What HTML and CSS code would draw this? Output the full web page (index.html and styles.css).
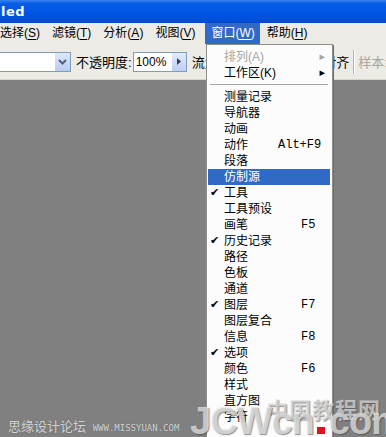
FILE: index.html
```html
<!DOCTYPE html>
<html>

<head>
    <meta charset="UTF-8">
    <title>Untitled</title>
    <link rel="stylesheet" href="styles.css">
</head>

<body>
    <div class="window">
        <div class="titlebar"><span class="title">led</span></div>

        <ul class="menubar">
            <li>选择(<u>S</u>)</li>
            <li>滤镜(<u>T</u>)</li>
            <li>分析(<u>A</u>)</li>
            <li>视图(<u>V</u>)</li>
            <li class="open">窗口(<u>W</u>)</li>
            <li>帮助(<u>H</u>)</li>
        </ul>

        <div class="toolbar">
            <div class="combo">
                <span class="combo-field"></span>
                <span class="combo-btn">
                    <svg width="9" height="6" viewBox="0 0 9 6"><path d="M1 1l3.5 3.5L8 1" fill="none" stroke="#4d6185" stroke-width="2"/></svg>
                </span>
            </div>
            <span class="label">不透明度:</span>
            <div class="spin">
                <span class="spin-field">100%</span>
                <span class="spin-btn">
                    <svg width="4" height="7" viewBox="0 0 4 7"><path d="M0 0l4 3.5L0 7z" fill="#2f3f60"/></svg>
                </span>
            </div>
            <span class="label">流量:</span>
            <div class="tb-right">
                <span class="label">对齐</span>
                <span class="sep"></span>
                <span class="label dim">样本:</span>
            </div>
        </div>

        <div class="canvas"></div>

        <ul class="dropdown">
            <li class="disabled">排列(A)<span class="arrow">&#9656;</span></li>
            <li>工作区(K)<span class="arrow">&#9656;</span></li>
            <li class="divider"></li>
            <li>测量记录</li>
            <li>导航器</li>
            <li>动画</li>
            <li>动作<span class="key">Alt+F9</span></li>
            <li>段落</li>
            <li class="active">仿制源</li>
            <li class="checked">工具</li>
            <li>工具预设</li>
            <li>画笔<span class="key short">F5</span></li>
            <li class="checked">历史记录</li>
            <li>路径</li>
            <li>色板</li>
            <li>通道</li>
            <li class="checked">图层<span class="key short">F7</span></li>
            <li>图层复合</li>
            <li>信息<span class="key short">F8</span></li>
            <li class="checked">选项</li>
            <li>颜色<span class="key short">F6</span></li>
            <li>样式</li>
            <li>直方图</li>
            <li>字符</li>
        </ul>

        <div class="mark-left">思缘设计论坛 <span class="mark-url">WWW.MISSYUAN.COM</span></div>
        <div class="mark-cn">中国教程网</div>
        <div class="mark-site">JCWcn<span class="dot"></span>com</div>
    </div>
</body>

</html>
```

FILE: styles.css
```css
* {
    margin: 0;
    padding: 0;
}

body {
    width: 386px;
    height: 437px;
    overflow: hidden;
    background: #808080;
    font-family: "Liberation Sans", "Noto Sans CJK SC", sans-serif;
    font-size: 12px;
    color: #000;
}

.window {
    position: relative;
    height: 437px;
    display: flex;
    flex-direction: column;
}

.titlebar {
    height: 23px;
    flex-shrink: 0;
    background: linear-gradient(#3a80f3 0%, #0a5fe6 15%, #0055e5 50%, #0050dc 85%, #0a48c4 100%);
    display: flex;
    align-items: center;
}

.title {
    color: #fff;
    font-family: "DejaVu Sans", sans-serif;
    font-weight: bold;
    font-size: 13px;
    margin-left: 1px;
    letter-spacing: 0.5px;
}

.menubar {
    height: 21px;
    flex-shrink: 0;
    background: #ecebe5;
    list-style: none;
    display: flex;
    align-items: stretch;
    margin-left: -5px;
}

.menubar li {
    padding: 0 5px;
    margin-right: 2px;
    line-height: 20px;
    white-space: nowrap;
}

.menubar li u {
    text-decoration: none;
    border-bottom: 1px solid currentColor;
    line-height: 11px;
    display: inline-block;
}

.menubar .open {
    background: #316ac5;
    color: #fff;
    margin-left: 3px;
    padding: 0 5px 0 6px;
}

.toolbar {
    height: 35px;
    flex-shrink: 0;
    background: #ecebe5;
    border-bottom: 1px solid #d6d3c7;
    box-shadow: 0 1px 0 #9c9a92;
    display: flex;
    align-items: center;
    overflow: hidden;
    white-space: nowrap;
}

.combo {
    display: flex;
    height: 18px;
    border: 1px solid #7f9db9;
    border-left: none;
    margin-top: 1px;
}

.combo-field {
    width: 54px;
    background: #fff;
}

.combo-btn {
    width: 15px;
    background: linear-gradient(#dfe8fb, #b8cbf2);
    border-left: 1px solid #fff;
    display: flex;
    align-items: center;
    justify-content: center;
}

.label {
    margin-left: 5px;
    font-size: 13px;
}

.spin {
    display: flex;
    height: 18px;
    margin-left: 1px;
    border: 1px solid #7f9db9;
}

.spin-field {
    width: 36px;
    background: #fff;
    padding-left: 2px;
    line-height: 18px;
    font-size: 12px;
}

.spin-btn {
    width: 14px;
    background: linear-gradient(#e2ebfb, #bccdf0);
    display: flex;
    align-items: center;
    justify-content: center;
}

.tb-right {
    display: flex;
    align-items: center;
    margin-left: 97px;
}

.sep {
    width: 1px;
    height: 24px;
    background: #b5b3aa;
    margin-left: 4px;
    box-shadow: 1px 0 0 #fff;
}

.label.dim {
    color: #a7a6a0;
    margin-left: 4px;
}

.canvas {
    flex: 1;
    background: #808080;
}

.dropdown {
    position: absolute;
    left: 206px;
    top: 44px;
    width: 125px;
    height: 400px;
    background: #fcfcfc;
    border: 1px solid #8e8d88;
    box-shadow: 1px 1px 0 #6d6d6d;
    list-style: none;
    padding-top: 4px;
}

.dropdown li {
    position: relative;
    height: 16px;
    line-height: 16px;
    padding-left: 16px;
    margin: 0 2px 0 1px;
    font-size: 12px;
    white-space: nowrap;
}

.dropdown .disabled {
    color: #a6a59f;
}

.dropdown .divider {
    height: 1px;
    margin: 3px 4px 3px 3px;
    background: #a7a6a0;
    border-bottom: 1px solid #fff;
}

.dropdown .active {
    background: #316ac5;
    color: #fff;
}

.dropdown .checked::before {
    content: "\2714";
    position: absolute;
    left: 2px;
    top: 0;
    font-size: 11px;
    font-family: "DejaVu Sans", sans-serif;
}

.dropdown .arrow {
    position: absolute;
    right: 5px;
    top: 0;
    font-size: 11px;
    font-family: "DejaVu Sans", sans-serif;
}

.dropdown .key {
    position: absolute;
    left: 70px;
    top: 0;
    font-family: "Liberation Mono", monospace;
    font-size: 12px;
}

.dropdown .key.short {
    left: 93px;
}

.mark-left {
    position: absolute;
    left: 8px;
    top: 416px;
    color: rgba(235, 235, 235, 0.85);
    font-size: 13px;
    text-shadow: 0 0 1px #555;
}

.mark-url {
    font-family: "DejaVu Sans Mono", monospace;
    font-size: 9px;
    margin-left: 3px;
}

.mark-cn {
    position: absolute;
    left: 266px;
    top: 392px;
    font-size: 22px;
    font-weight: bold;
    letter-spacing: 1px;
    color: rgba(225, 225, 225, 0.7);
    text-shadow: 1px 1px 1px rgba(80, 80, 80, 0.6);
}

.mark-site {
    position: absolute;
    left: 190px;
    top: 400px;
    font-size: 38px;
    font-weight: bold;
    letter-spacing: -1px;
    color: rgba(230, 230, 230, 0.75);
    text-shadow: 1px 1px 1px rgba(70, 70, 70, 0.6);
    display: flex;
    align-items: baseline;
}

.mark-site .dot {
    width: 8px;
    height: 7px;
    background: #e0121b;
    margin: 0 4px 0 3px;
}
```
